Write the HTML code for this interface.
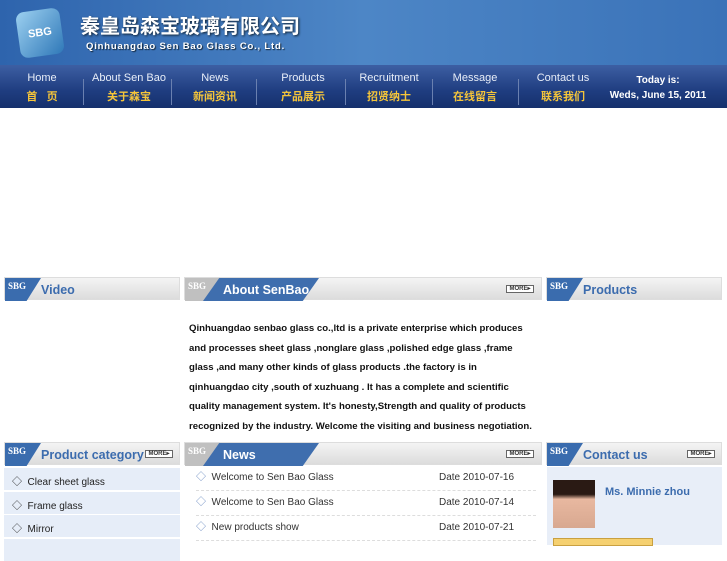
<!DOCTYPE html>
<html><head><meta charset="utf-8"><style>
*{margin:0;padding:0;box-sizing:border-box}
body{width:727px;height:545px;overflow:hidden;background:#fff;font-family:"Liberation Sans","Noto Sans CJK SC",sans-serif;position:relative}
.top{position:absolute;left:0;top:0;width:727px;height:65px;background:linear-gradient(90deg,#2e64ad 0%,#4d86c6 50%,#3a72b8 100%)}
.nav{position:absolute;left:0;top:65px;width:727px;height:43px;background:linear-gradient(#3d5fa3,#1f3d80 60%,#15306c)}
.nav div{position:absolute;top:7px;text-align:center;color:#e8eef8;font-size:11px}
.nav div b{display:block;color:#f5c53a;font-size:11px;margin-top:4px}
.sep{position:absolute;top:14px;width:1px;height:26px;background:#6a80b0}
.hd{position:absolute;height:23px;background:linear-gradient(#f4f4f4,#dcdcdc);border:1px solid #ddd}
.tab{position:absolute;left:0;top:0;height:23px;width:36px;background:#3a6cae;clip-path:polygon(0 0,100% 0,60% 100%,0 100%);color:#fff;font:bold 9px "Liberation Serif",serif;padding:3px 0 0 3px}
.tab2{position:absolute;left:0;top:0;height:23px;width:45px;background:#c0c0c0;color:#fff;font:bold 9px "Liberation Serif",serif;padding:3px 0 0 3px}
.btab{position:absolute;left:18px;top:0;height:23px;width:116px;background:#3f6eae;clip-path:polygon(14% 0,100% 0,86% 100%,0 100%);color:#fff;font-weight:bold;font-size:12.5px;padding:5px 0 0 20px}
.t{position:absolute;left:36px;top:5px;color:#3c6cae;font-weight:bold;font-size:12.5px}
.more{position:absolute;top:7px;width:28px;height:8px;border:1px solid #666;background:#fff;font-size:6px;line-height:6px;text-align:center;color:#333;font-weight:bold}
.about{position:absolute;left:189px;top:319px;font-size:9.6px;font-weight:bold;line-height:19.6px;color:#111;white-space:nowrap}
.cat{position:absolute;left:4px;width:176px;height:22px;background:#e6edf8;font-size:10px;color:#222;padding:5px 0 0 8px}
.news{position:absolute;left:196px;width:340px;height:25px;border-bottom:1px dashed #ddd;font-size:10px;line-height:12px;color:#333;padding-top:6px}
.news span{position:absolute;left:243px;top:6px}
</style></head><body>
<div class="top">
<div style="position:absolute;left:18px;top:10px;width:44px;height:46px;border-radius:8px;background:linear-gradient(135deg,#9cd0f0,#2f78b8);transform:rotate(-8deg);color:#fff;font:bold 11px sans-serif;padding-top:17px;text-align:center">SBG</div>
<div style="position:absolute;left:80px;top:10px;color:#fff;font-size:20px;font-weight:bold;text-shadow:1px 1px 2px #123">秦皇岛森宝玻璃有限公司</div>
<div style="position:absolute;left:86px;top:41px;color:#fff;font-size:9.5px;font-weight:bold;letter-spacing:0.8px;text-shadow:1px 1px 1px #123">Qinhuangdao Sen Bao Glass Co., Ltd.</div>
</div>
<div class="nav">
<div style="left:20px;width:44px">Home<b>首&nbsp;&nbsp;&nbsp;页</b></div>
<div style="left:88px;width:82px">About Sen Bao<b>关于森宝</b></div>
<div style="left:186px;width:58px">News<b>新闻资讯</b></div>
<div style="left:272px;width:62px">Products<b>产品展示</b></div>
<div style="left:354px;width:70px">Recruitment<b>招贤纳士</b></div>
<div style="left:445px;width:60px">Message<b>在线留言</b></div>
<div style="left:532px;width:62px">Contact us<b>联系我们</b></div>
<div style="left:605px;width:106px;font-weight:bold;font-size:10px;color:#fff;top:10px">Today is:<br><span style="display:block;margin-top:4px">Weds, June 15, 2011</span></div>
<span class="sep" style="left:83px"></span><span class="sep" style="left:171px"></span><span class="sep" style="left:256px"></span><span class="sep" style="left:345px"></span><span class="sep" style="left:432px"></span><span class="sep" style="left:518px"></span>
</div>

<div class="hd" style="left:4px;top:277px;width:176px"><div class="tab">SBG</div><div class="t">Video</div></div>
<div class="hd" style="left:184px;top:277px;width:358px"><div class="tab2">SBG</div><div class="btab">About SenBao</div><div class="more" style="left:321px">MORE▸</div></div>
<div class="hd" style="left:546px;top:277px;width:176px"><div class="tab">SBG</div><div class="t">Products</div></div>

<div class="about">Qinhuangdao senbao glass co.,ltd is a private enterprise which produces<br>and processes sheet glass ,nonglare glass ,polished edge glass ,frame<br>glass ,and many other kinds of glass products .the factory is in<br>qinhuangdao city ,south of xuzhuang . It has a complete and scientific<br>quality management system. It's honesty,Strength and quality of products<br>recognized by the industry. Welcome the visiting and business negotiation.</div>

<div class="hd" style="left:4px;top:442px;width:176px"><div class="tab">SBG</div><div class="t">Product category</div><div class="more" style="left:140px">MORE▸</div></div>
<div class="hd" style="left:184px;top:442px;width:358px"><div class="tab2">SBG</div><div class="btab">News</div><div class="more" style="left:321px">MORE▸</div></div>
<div class="hd" style="left:546px;top:442px;width:176px"><div class="tab">SBG</div><div class="t">Contact us</div><div class="more" style="left:140px">MORE▸</div></div>

<div class="cat" style="top:468px">◇&nbsp; Clear sheet glass</div>
<div class="cat" style="top:492px">◇&nbsp; Frame glass</div>
<div class="cat" style="top:515px">◇&nbsp; Mirror</div>
<div class="cat" style="top:539px"></div>

<div class="news" style="top:466px"><i style="font-style:normal;color:#6a8ac0">◇</i>&nbsp; Welcome to Sen Bao Glass<span>Date 2010-07-16</span></div>
<div class="news" style="top:491px"><i style="font-style:normal;color:#6a8ac0">◇</i>&nbsp; Welcome to Sen Bao Glass<span>Date 2010-07-14</span></div>
<div class="news" style="top:516px"><i style="font-style:normal;color:#6a8ac0">◇</i>&nbsp; New products show<span>Date 2010-07-21</span></div>

<div style="position:absolute;left:547px;top:467px;width:175px;height:78px;background:#e8eef8"></div>
<div style="position:absolute;left:553px;top:480px;width:42px;height:48px;background:linear-gradient(#2a1a14 0,#2a1a14 30%,#e8b8a0 40%,#d8a890 100%)"></div>
<div style="position:absolute;left:605px;top:486px;color:#3c6cae;font-weight:bold;font-size:11px">Ms. Minnie zhou</div>
<div style="position:absolute;left:553px;top:538px;width:100px;height:8px;background:#f5d070;border:1px solid #c9a040"></div>
</body></html>
